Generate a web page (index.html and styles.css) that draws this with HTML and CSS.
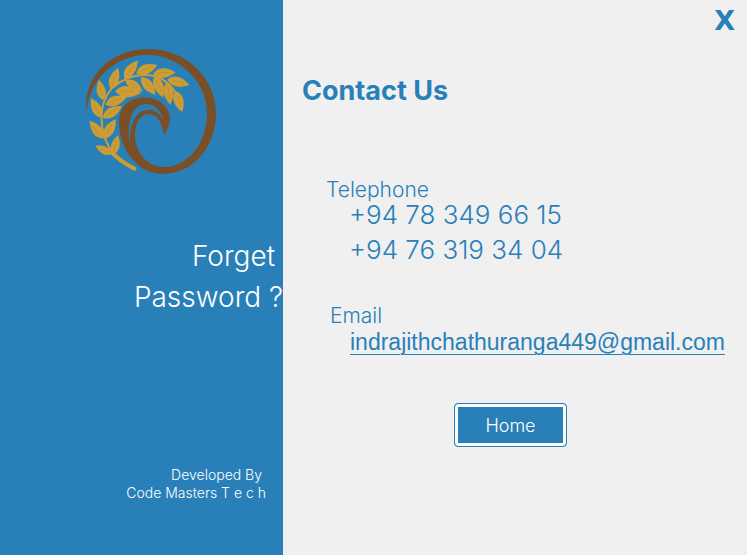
FILE: index.html
```html
<!DOCTYPE html>
<html lang="en">
<head>
<meta charset="utf-8">
<meta name="viewport" content="width=device-width, initial-scale=1">
<title>Contact Us</title>
<link rel="stylesheet" href="styles.css">
</head>
<body>
<div class="window">
  <aside class="sidebar">
    <svg class="logo" viewBox="0 0 450 435" aria-hidden="true">
      <defs>
        <g id="leaf">
          <path d="M2 0C18-21 42-20 70 0C44 17 20 19 2 0Z" fill="#cd9d34"/>
          <path d="M16-1Q34-4 52-1" fill="none" stroke="#ad8c40" stroke-width="2"/>
        </g>
      </defs>
      <path fill="#7b4f26" fill-rule="evenodd" d="M36 215C20 110 110 27 220 27C335 27 423 115 423 220C423 325 350 402 265 402C190 402 132 330 132 245C132 200 165 172 208 172C255 172 285 205 285 235C285 255 275 270 269 287C262 265 255 222 222 222C195 222 180 250 180 285C180 335 215 381 268 381C340 381 396 310 396 220C396 120 310 47 220 44C120 44 40 120 36 215ZM165 315C155 260 165 195 212 192C245 192 260 220 265 240C255 220 240 209 222 209C180 209 162 255 165 315Z"/>
      <path fill="none" stroke="#cd9d34" stroke-width="6" stroke-linecap="round" d="M120 348C60 270 75 185 110 145C165 95 255 85 300 155"/>
      <path fill="none" stroke="#cd9d34" stroke-width="12" stroke-linecap="round" d="M112 340Q145 370 178 386"/>
      <use href="#leaf" transform="translate(112 342) rotate(206) scale(.8)"/>
      <use href="#leaf" transform="translate(116 345) rotate(-78) scale(.88)"/>
      <use href="#leaf" transform="translate(88 297) rotate(-129)"/>
      <use href="#leaf" transform="translate(88 298) rotate(-61)"/>
      <use href="#leaf" transform="translate(82 235) rotate(-119)"/>
      <use href="#leaf" transform="translate(82 235) rotate(-32)"/>
      <use href="#leaf" transform="translate(86 182) rotate(-103) scale(.92)"/>
      <use href="#leaf" transform="translate(90 195) rotate(-21)"/>
      <use href="#leaf" transform="translate(108 150) rotate(-72)"/>
      <use href="#leaf" transform="translate(118 154) rotate(3) scale(1.15)"/>
      <use href="#leaf" transform="translate(147 118) rotate(-54)"/>
      <use href="#leaf" transform="translate(150 120) rotate(33) scale(.9)"/>
      <use href="#leaf" transform="translate(182 101) rotate(-22)"/>
      <use href="#leaf" transform="translate(197 110) rotate(51)"/>
      <use href="#leaf" transform="translate(232 103) rotate(-5)"/>
      <use href="#leaf" transform="translate(237 108) rotate(67)"/>
      <use href="#leaf" transform="translate(275 118) rotate(14)"/>
      <use href="#leaf" transform="translate(274 125) rotate(80)"/>
      <use href="#leaf" transform="translate(299 150) rotate(71)"/>
    </svg>
    <h2 class="question"><span>Forget</span><span class="question-end">Password ?</span></h2>
    <p class="credit"><span>Developed By</span><br>Code Masters T e c h</p>
  </aside>
  <main class="content">
    <button class="close" type="button" aria-label="Close">X</button>
    <h1 class="title">Contact Us</h1>
    <section class="phone">
      <h3 class="label">Telephone</h3>
      <p class="number">+94 78 349 66 15</p>
      <p class="number">+94 76 319 34 04</p>
    </section>
    <section class="email">
      <h3 class="label">Email</h3>
      <a class="address" href="mailto:indrajithchathuranga449@gmail.com">indrajithchathuranga449@gmail.com</a>
    </section>
    <button class="home" type="button">Home</button>
  </main>
</div>
</body>
</html>
```

FILE: styles.css
```css
* { box-sizing: border-box; }

body {
  margin: 0;
  font-family: "Century Gothic", Inter, sans-serif;
  font-weight: 300;
  color: #2980b9;
  background: #f0f0f0;
}

h1, h2, h3, p { margin: 0; font-weight: inherit; }

button { font-family: inherit; cursor: pointer; }

.window {
  display: grid;
  grid-template-columns: 283px 1fr;
  min-height: 100vh;
}

.sidebar {
  display: flex;
  flex-direction: column;
  align-items: flex-end;
  padding-top: 40px;
  color: #fff;
  background: #2980b9;
}

.logo { width: 150px; margin-right: 58px; }

.question {
  display: flex;
  flex-direction: column;
  padding-right: 8px;
  margin-top: 51px;
  font-size: 28px;
  line-height: 41px;
  text-align: right;
}

.question-end { margin-right: -8px; }

.credit {
  margin: 148px 17px 0 0;
  font-size: 14px;
  line-height: 18px;
  text-align: right;
}

.credit span { padding-right: 4px; }

.content {
  display: flex;
  flex-direction: column;
  align-items: flex-start;
  padding-left: 19px;
}

.close {
  align-self: flex-end;
  margin-right: 12px;
  padding: 0;
  border: 0;
  background: none;
  color: inherit;
  font: bold 27px/42px "DejaVu Sans", sans-serif;
}

.title {
  margin-top: 32px;
  font-size: 27px;
  font-weight: 700;
  line-height: 34px;
}

.phone { margin: 70px 0 0 24px; }

.label { font-size: 21px; line-height: 24px; }

.number {
  padding-left: 23px;
  font-size: 26px;
  line-height: 35px;
}

.phone .label { margin-bottom: -5px; }

.email { margin: 37px 0 0 28px; }

.address {
  display: block;
  margin-left: 20px;
  color: inherit;
  font: 23px/28px "Liberation Sans", sans-serif;
  text-decoration-thickness: 1px;
  text-underline-offset: 4px;
}

.home {
  width: 113px;
  height: 44px;
  margin: 47px 0 0 152px;
  padding: 0;
  border: 1px solid #2980b9;
  border-radius: 4px;
  background: #2980b9;
  box-shadow: inset 0 0 0 3px #fff;
  color: #fff;
  font-size: 18px;
  font-weight: 300;
}
```
